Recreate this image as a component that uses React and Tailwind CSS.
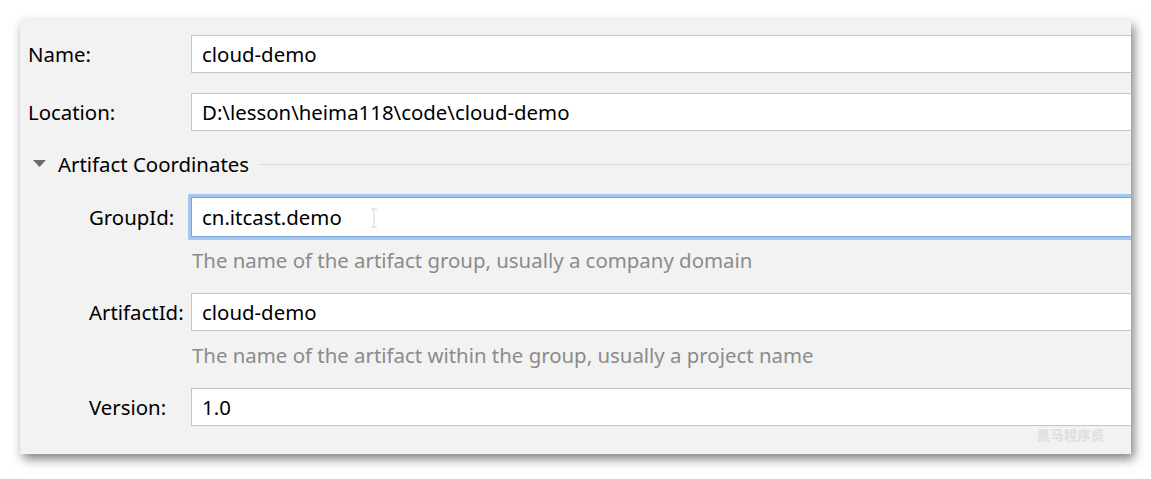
import React from 'react';

const font = { fontFamily: '"Noto Sans", "Noto Sans CJK SC", sans-serif' };

function Field({ value, focused, children }) {
  return (
    <div
      className={
        'flex-1 flex items-center bg-white pl-[10px] pt-px text-[20.4px] text-black ' +
        (focused
          ? 'h-[40px] border border-[#7aa5da] shadow-[0_0_0_3px_#a3c7ee]'
          : 'h-[38px] border border-[#c4c4c4]')
      }
    >
      <span className="leading-none">{value}</span>
      {children}
    </div>
  );
}

function Row({ label, indent, value, focused, className = '', children }) {
  return (
    <div className={'flex items-center ' + className}>
      <div className={'shrink-0 pt-px text-[20.4px] text-black ' + (indent ? 'w-[171px] pl-[69px]' : 'w-[171px] pl-[8px]')}>
        {label}
      </div>
      <Field value={value} focused={focused}>
        {children}
      </Field>
    </div>
  );
}

function Hint({ text, className = '' }) {
  return (
    <div className={'h-[24px] flex items-center pl-[172px] text-[20.4px] text-[#8b8b8b] ' + className}>
      {text}
    </div>
  );
}

export default function App() {
  return (
    <div className="w-[1151px] h-[479px] bg-white pt-[20px] pl-[20px]" style={font}>
      <div className="relative w-[1111px] h-[434px] bg-[#f2f2f2] overflow-hidden shadow-[3px_5px_10px_rgba(0,0,0,0.5)]">
        <div className="w-[1140px] pt-[15px] flex flex-col">
          <Row label="Name:" value="cloud-demo" />
          <Row label="Location:" value="D:\lesson\heima118\code\cloud-demo" className="mt-[20px]" />

          <div className="mt-[19px] h-[28px] flex items-center">
            <svg width="14" height="8" viewBox="0 0 14 8" className="ml-[13px] mr-[11px]">
              <path d="M0 0 L13 0 L6.5 7 Z" fill="#6b6b6b" />
            </svg>
            <span className="text-[20.4px] text-black">Artifact Coordinates</span>
            <div className="flex-1 h-px bg-[#d8d8d8] ml-[10px]" />
          </div>

          <Row label="GroupId:" indent value="cn.itcast.demo" focused className="mt-[19px]">
            <svg width="8" height="20" viewBox="0 0 8 20" className="ml-[28px]">
              <path d="M1 1 H7 M4 1 V19 M1 19 H7" stroke="#d6d6d6" strokeWidth="1" fill="none" />
            </svg>
          </Row>
          <Hint text="The name of the artifact group, usually a company domain" className="mt-[11px]" />

          <Row label="ArtifactId:" indent value="cloud-demo" className="mt-[21px]" />
          <Hint text="The name of the artifact within the group, usually a project name" className="mt-[12px]" />

          <Row label="Version:" indent value="1.0" className="mt-[21px]" />
        </div>

        <div className="absolute left-[1017px] top-[406px] text-[13px] font-black text-[#e0e0e0] tracking-[0.5px]">
          黑马程序员
        </div>
      </div>
    </div>
  );
}
